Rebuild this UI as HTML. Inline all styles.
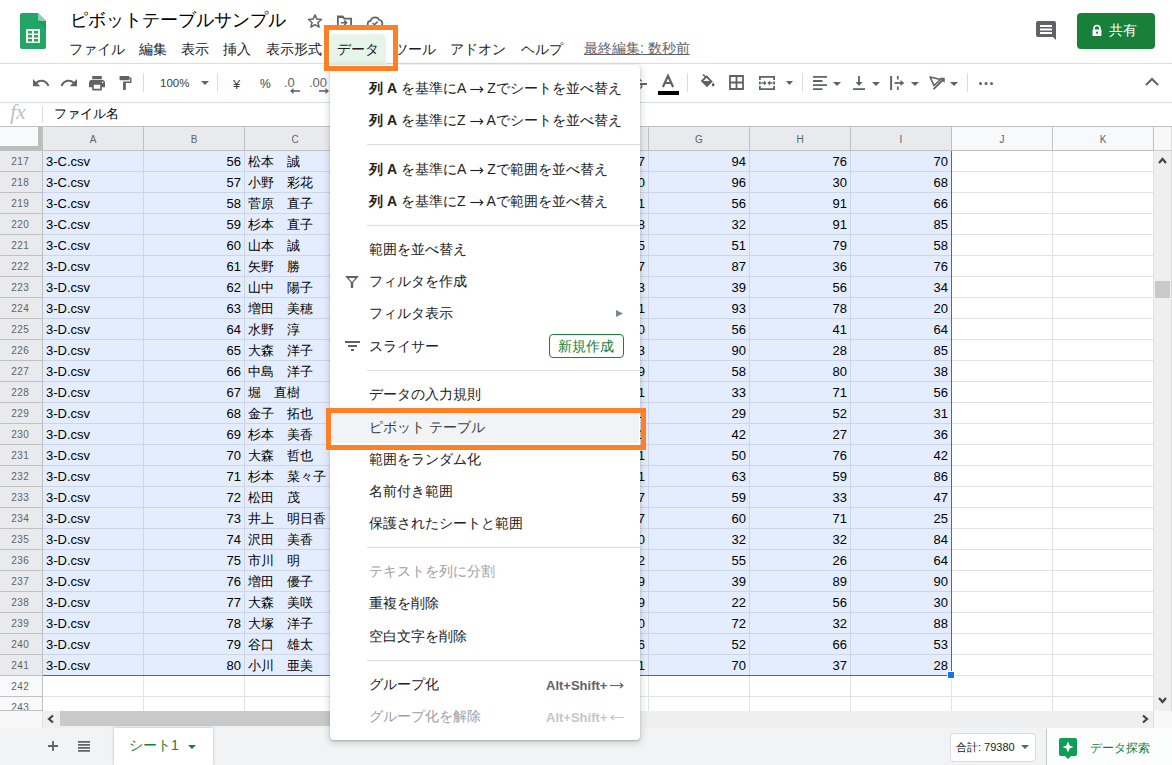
<!DOCTYPE html>
<html><head><meta charset="utf-8"><style>
*{box-sizing:border-box;margin:0;padding:0}
html,body{width:1172px;height:765px;overflow:hidden;background:#fff;font-family:"Liberation Sans",sans-serif;color:#202124}
.a{position:absolute}
.t{position:absolute;white-space:nowrap;line-height:1}
svg{position:absolute;overflow:visible}
</style></head>
<body>
<div class="a" style="left:0px;top:126px;width:1172px;height:1px;background:#c0c0c0"></div><div class="a" style="left:0px;top:127px;width:42px;height:23px;background:#f8f9fa"></div><div class="a" style="left:43px;top:127px;width:100px;height:23px;background:#e8eaed"></div><div class="a" style="left:143px;top:127px;width:1px;height:23px;background:#c0c0c0"></div><div class="t" style="left:43px;top:135px;width:100px;text-align:center;font-size:10px;color:#5f6368">A</div><div class="a" style="left:144px;top:127px;width:100px;height:23px;background:#e8eaed"></div><div class="a" style="left:244px;top:127px;width:1px;height:23px;background:#c0c0c0"></div><div class="t" style="left:144px;top:135px;width:100px;text-align:center;font-size:10px;color:#5f6368">B</div><div class="a" style="left:245px;top:127px;width:100px;height:23px;background:#e8eaed"></div><div class="a" style="left:345px;top:127px;width:1px;height:23px;background:#c0c0c0"></div><div class="t" style="left:245px;top:135px;width:100px;text-align:center;font-size:10px;color:#5f6368">C</div><div class="a" style="left:346px;top:127px;width:100px;height:23px;background:#e8eaed"></div><div class="a" style="left:446px;top:127px;width:1px;height:23px;background:#c0c0c0"></div><div class="t" style="left:346px;top:135px;width:100px;text-align:center;font-size:10px;color:#5f6368">D</div><div class="a" style="left:447px;top:127px;width:100px;height:23px;background:#e8eaed"></div><div class="a" style="left:547px;top:127px;width:1px;height:23px;background:#c0c0c0"></div><div class="t" style="left:447px;top:135px;width:100px;text-align:center;font-size:10px;color:#5f6368">E</div><div class="a" style="left:548px;top:127px;width:100px;height:23px;background:#e8eaed"></div><div class="a" style="left:648px;top:127px;width:1px;height:23px;background:#c0c0c0"></div><div class="t" style="left:548px;top:135px;width:100px;text-align:center;font-size:10px;color:#5f6368">F</div><div class="a" style="left:649px;top:127px;width:100px;height:23px;background:#e8eaed"></div><div class="a" style="left:749px;top:127px;width:1px;height:23px;background:#c0c0c0"></div><div class="t" style="left:649px;top:135px;width:100px;text-align:center;font-size:10px;color:#5f6368">G</div><div class="a" style="left:750px;top:127px;width:100px;height:23px;background:#e8eaed"></div><div class="a" style="left:850px;top:127px;width:1px;height:23px;background:#c0c0c0"></div><div class="t" style="left:750px;top:135px;width:100px;text-align:center;font-size:10px;color:#5f6368">H</div><div class="a" style="left:851px;top:127px;width:100px;height:23px;background:#e8eaed"></div><div class="a" style="left:951px;top:127px;width:1px;height:23px;background:#c0c0c0"></div><div class="t" style="left:851px;top:135px;width:100px;text-align:center;font-size:10px;color:#5f6368">I</div><div class="a" style="left:952px;top:127px;width:100px;height:23px;background:#f8f9fa"></div><div class="a" style="left:1052px;top:127px;width:1px;height:23px;background:#c0c0c0"></div><div class="t" style="left:952px;top:135px;width:100px;text-align:center;font-size:10px;color:#5f6368">J</div><div class="a" style="left:1053px;top:127px;width:100px;height:23px;background:#f8f9fa"></div><div class="a" style="left:1153px;top:127px;width:1px;height:23px;background:#c0c0c0"></div><div class="t" style="left:1053px;top:135px;width:100px;text-align:center;font-size:10px;color:#5f6368">K</div><div class="a" style="left:38px;top:127px;width:4px;height:23px;background:#bdbdbd"></div><div class="a" style="left:0px;top:146px;width:42px;height:4px;background:#bdbdbd"></div><div class="a" style="left:42px;top:127px;width:1px;height:23px;background:#c0c0c0"></div><div class="a" style="left:0px;top:150px;width:1154px;height:1px;background:#c0c0c0"></div><div class="a" style="left:43px;top:151px;width:909px;height:525px;background:#e4edfd"></div><div class="a" style="left:0px;top:151px;width:42px;height:20px;background:#e8eaed"></div><div class="t" style="left:0;top:157px;width:40px;text-align:center;font-size:10px;letter-spacing:0.5px;text-indent:0.5px;color:#5f6368">217</div><div class="a" style="left:0px;top:171px;width:42px;height:1px;background:#c0c0c0"></div><div class="a" style="left:43px;top:171px;width:909px;height:1px;background:#cdd6e6"></div><div class="a" style="left:952px;top:171px;width:202px;height:1px;background:#e2e3e3"></div><div class="a" style="left:0px;top:172px;width:42px;height:20px;background:#e8eaed"></div><div class="t" style="left:0;top:178px;width:40px;text-align:center;font-size:10px;letter-spacing:0.5px;text-indent:0.5px;color:#5f6368">218</div><div class="a" style="left:0px;top:192px;width:42px;height:1px;background:#c0c0c0"></div><div class="a" style="left:43px;top:192px;width:909px;height:1px;background:#cdd6e6"></div><div class="a" style="left:952px;top:192px;width:202px;height:1px;background:#e2e3e3"></div><div class="a" style="left:0px;top:193px;width:42px;height:20px;background:#e8eaed"></div><div class="t" style="left:0;top:199px;width:40px;text-align:center;font-size:10px;letter-spacing:0.5px;text-indent:0.5px;color:#5f6368">219</div><div class="a" style="left:0px;top:213px;width:42px;height:1px;background:#c0c0c0"></div><div class="a" style="left:43px;top:213px;width:909px;height:1px;background:#cdd6e6"></div><div class="a" style="left:952px;top:213px;width:202px;height:1px;background:#e2e3e3"></div><div class="a" style="left:0px;top:214px;width:42px;height:20px;background:#e8eaed"></div><div class="t" style="left:0;top:220px;width:40px;text-align:center;font-size:10px;letter-spacing:0.5px;text-indent:0.5px;color:#5f6368">220</div><div class="a" style="left:0px;top:234px;width:42px;height:1px;background:#c0c0c0"></div><div class="a" style="left:43px;top:234px;width:909px;height:1px;background:#cdd6e6"></div><div class="a" style="left:952px;top:234px;width:202px;height:1px;background:#e2e3e3"></div><div class="a" style="left:0px;top:235px;width:42px;height:20px;background:#e8eaed"></div><div class="t" style="left:0;top:241px;width:40px;text-align:center;font-size:10px;letter-spacing:0.5px;text-indent:0.5px;color:#5f6368">221</div><div class="a" style="left:0px;top:255px;width:42px;height:1px;background:#c0c0c0"></div><div class="a" style="left:43px;top:255px;width:909px;height:1px;background:#cdd6e6"></div><div class="a" style="left:952px;top:255px;width:202px;height:1px;background:#e2e3e3"></div><div class="a" style="left:0px;top:256px;width:42px;height:20px;background:#e8eaed"></div><div class="t" style="left:0;top:262px;width:40px;text-align:center;font-size:10px;letter-spacing:0.5px;text-indent:0.5px;color:#5f6368">222</div><div class="a" style="left:0px;top:276px;width:42px;height:1px;background:#c0c0c0"></div><div class="a" style="left:43px;top:276px;width:909px;height:1px;background:#cdd6e6"></div><div class="a" style="left:952px;top:276px;width:202px;height:1px;background:#e2e3e3"></div><div class="a" style="left:0px;top:277px;width:42px;height:20px;background:#e8eaed"></div><div class="t" style="left:0;top:283px;width:40px;text-align:center;font-size:10px;letter-spacing:0.5px;text-indent:0.5px;color:#5f6368">223</div><div class="a" style="left:0px;top:297px;width:42px;height:1px;background:#c0c0c0"></div><div class="a" style="left:43px;top:297px;width:909px;height:1px;background:#cdd6e6"></div><div class="a" style="left:952px;top:297px;width:202px;height:1px;background:#e2e3e3"></div><div class="a" style="left:0px;top:298px;width:42px;height:20px;background:#e8eaed"></div><div class="t" style="left:0;top:304px;width:40px;text-align:center;font-size:10px;letter-spacing:0.5px;text-indent:0.5px;color:#5f6368">224</div><div class="a" style="left:0px;top:318px;width:42px;height:1px;background:#c0c0c0"></div><div class="a" style="left:43px;top:318px;width:909px;height:1px;background:#cdd6e6"></div><div class="a" style="left:952px;top:318px;width:202px;height:1px;background:#e2e3e3"></div><div class="a" style="left:0px;top:319px;width:42px;height:20px;background:#e8eaed"></div><div class="t" style="left:0;top:325px;width:40px;text-align:center;font-size:10px;letter-spacing:0.5px;text-indent:0.5px;color:#5f6368">225</div><div class="a" style="left:0px;top:339px;width:42px;height:1px;background:#c0c0c0"></div><div class="a" style="left:43px;top:339px;width:909px;height:1px;background:#cdd6e6"></div><div class="a" style="left:952px;top:339px;width:202px;height:1px;background:#e2e3e3"></div><div class="a" style="left:0px;top:340px;width:42px;height:20px;background:#e8eaed"></div><div class="t" style="left:0;top:346px;width:40px;text-align:center;font-size:10px;letter-spacing:0.5px;text-indent:0.5px;color:#5f6368">226</div><div class="a" style="left:0px;top:360px;width:42px;height:1px;background:#c0c0c0"></div><div class="a" style="left:43px;top:360px;width:909px;height:1px;background:#cdd6e6"></div><div class="a" style="left:952px;top:360px;width:202px;height:1px;background:#e2e3e3"></div><div class="a" style="left:0px;top:361px;width:42px;height:20px;background:#e8eaed"></div><div class="t" style="left:0;top:367px;width:40px;text-align:center;font-size:10px;letter-spacing:0.5px;text-indent:0.5px;color:#5f6368">227</div><div class="a" style="left:0px;top:381px;width:42px;height:1px;background:#c0c0c0"></div><div class="a" style="left:43px;top:381px;width:909px;height:1px;background:#cdd6e6"></div><div class="a" style="left:952px;top:381px;width:202px;height:1px;background:#e2e3e3"></div><div class="a" style="left:0px;top:382px;width:42px;height:20px;background:#e8eaed"></div><div class="t" style="left:0;top:388px;width:40px;text-align:center;font-size:10px;letter-spacing:0.5px;text-indent:0.5px;color:#5f6368">228</div><div class="a" style="left:0px;top:402px;width:42px;height:1px;background:#c0c0c0"></div><div class="a" style="left:43px;top:402px;width:909px;height:1px;background:#cdd6e6"></div><div class="a" style="left:952px;top:402px;width:202px;height:1px;background:#e2e3e3"></div><div class="a" style="left:0px;top:403px;width:42px;height:20px;background:#e8eaed"></div><div class="t" style="left:0;top:409px;width:40px;text-align:center;font-size:10px;letter-spacing:0.5px;text-indent:0.5px;color:#5f6368">229</div><div class="a" style="left:0px;top:423px;width:42px;height:1px;background:#c0c0c0"></div><div class="a" style="left:43px;top:423px;width:909px;height:1px;background:#cdd6e6"></div><div class="a" style="left:952px;top:423px;width:202px;height:1px;background:#e2e3e3"></div><div class="a" style="left:0px;top:424px;width:42px;height:20px;background:#e8eaed"></div><div class="t" style="left:0;top:430px;width:40px;text-align:center;font-size:10px;letter-spacing:0.5px;text-indent:0.5px;color:#5f6368">230</div><div class="a" style="left:0px;top:444px;width:42px;height:1px;background:#c0c0c0"></div><div class="a" style="left:43px;top:444px;width:909px;height:1px;background:#cdd6e6"></div><div class="a" style="left:952px;top:444px;width:202px;height:1px;background:#e2e3e3"></div><div class="a" style="left:0px;top:445px;width:42px;height:20px;background:#e8eaed"></div><div class="t" style="left:0;top:451px;width:40px;text-align:center;font-size:10px;letter-spacing:0.5px;text-indent:0.5px;color:#5f6368">231</div><div class="a" style="left:0px;top:465px;width:42px;height:1px;background:#c0c0c0"></div><div class="a" style="left:43px;top:465px;width:909px;height:1px;background:#cdd6e6"></div><div class="a" style="left:952px;top:465px;width:202px;height:1px;background:#e2e3e3"></div><div class="a" style="left:0px;top:466px;width:42px;height:20px;background:#e8eaed"></div><div class="t" style="left:0;top:472px;width:40px;text-align:center;font-size:10px;letter-spacing:0.5px;text-indent:0.5px;color:#5f6368">232</div><div class="a" style="left:0px;top:486px;width:42px;height:1px;background:#c0c0c0"></div><div class="a" style="left:43px;top:486px;width:909px;height:1px;background:#cdd6e6"></div><div class="a" style="left:952px;top:486px;width:202px;height:1px;background:#e2e3e3"></div><div class="a" style="left:0px;top:487px;width:42px;height:20px;background:#e8eaed"></div><div class="t" style="left:0;top:493px;width:40px;text-align:center;font-size:10px;letter-spacing:0.5px;text-indent:0.5px;color:#5f6368">233</div><div class="a" style="left:0px;top:507px;width:42px;height:1px;background:#c0c0c0"></div><div class="a" style="left:43px;top:507px;width:909px;height:1px;background:#cdd6e6"></div><div class="a" style="left:952px;top:507px;width:202px;height:1px;background:#e2e3e3"></div><div class="a" style="left:0px;top:508px;width:42px;height:20px;background:#e8eaed"></div><div class="t" style="left:0;top:514px;width:40px;text-align:center;font-size:10px;letter-spacing:0.5px;text-indent:0.5px;color:#5f6368">234</div><div class="a" style="left:0px;top:528px;width:42px;height:1px;background:#c0c0c0"></div><div class="a" style="left:43px;top:528px;width:909px;height:1px;background:#cdd6e6"></div><div class="a" style="left:952px;top:528px;width:202px;height:1px;background:#e2e3e3"></div><div class="a" style="left:0px;top:529px;width:42px;height:20px;background:#e8eaed"></div><div class="t" style="left:0;top:535px;width:40px;text-align:center;font-size:10px;letter-spacing:0.5px;text-indent:0.5px;color:#5f6368">235</div><div class="a" style="left:0px;top:549px;width:42px;height:1px;background:#c0c0c0"></div><div class="a" style="left:43px;top:549px;width:909px;height:1px;background:#cdd6e6"></div><div class="a" style="left:952px;top:549px;width:202px;height:1px;background:#e2e3e3"></div><div class="a" style="left:0px;top:550px;width:42px;height:20px;background:#e8eaed"></div><div class="t" style="left:0;top:556px;width:40px;text-align:center;font-size:10px;letter-spacing:0.5px;text-indent:0.5px;color:#5f6368">236</div><div class="a" style="left:0px;top:570px;width:42px;height:1px;background:#c0c0c0"></div><div class="a" style="left:43px;top:570px;width:909px;height:1px;background:#cdd6e6"></div><div class="a" style="left:952px;top:570px;width:202px;height:1px;background:#e2e3e3"></div><div class="a" style="left:0px;top:571px;width:42px;height:20px;background:#e8eaed"></div><div class="t" style="left:0;top:577px;width:40px;text-align:center;font-size:10px;letter-spacing:0.5px;text-indent:0.5px;color:#5f6368">237</div><div class="a" style="left:0px;top:591px;width:42px;height:1px;background:#c0c0c0"></div><div class="a" style="left:43px;top:591px;width:909px;height:1px;background:#cdd6e6"></div><div class="a" style="left:952px;top:591px;width:202px;height:1px;background:#e2e3e3"></div><div class="a" style="left:0px;top:592px;width:42px;height:20px;background:#e8eaed"></div><div class="t" style="left:0;top:598px;width:40px;text-align:center;font-size:10px;letter-spacing:0.5px;text-indent:0.5px;color:#5f6368">238</div><div class="a" style="left:0px;top:612px;width:42px;height:1px;background:#c0c0c0"></div><div class="a" style="left:43px;top:612px;width:909px;height:1px;background:#cdd6e6"></div><div class="a" style="left:952px;top:612px;width:202px;height:1px;background:#e2e3e3"></div><div class="a" style="left:0px;top:613px;width:42px;height:20px;background:#e8eaed"></div><div class="t" style="left:0;top:619px;width:40px;text-align:center;font-size:10px;letter-spacing:0.5px;text-indent:0.5px;color:#5f6368">239</div><div class="a" style="left:0px;top:633px;width:42px;height:1px;background:#c0c0c0"></div><div class="a" style="left:43px;top:633px;width:909px;height:1px;background:#cdd6e6"></div><div class="a" style="left:952px;top:633px;width:202px;height:1px;background:#e2e3e3"></div><div class="a" style="left:0px;top:634px;width:42px;height:20px;background:#e8eaed"></div><div class="t" style="left:0;top:640px;width:40px;text-align:center;font-size:10px;letter-spacing:0.5px;text-indent:0.5px;color:#5f6368">240</div><div class="a" style="left:0px;top:654px;width:42px;height:1px;background:#c0c0c0"></div><div class="a" style="left:43px;top:654px;width:909px;height:1px;background:#cdd6e6"></div><div class="a" style="left:952px;top:654px;width:202px;height:1px;background:#e2e3e3"></div><div class="a" style="left:0px;top:655px;width:42px;height:20px;background:#e8eaed"></div><div class="t" style="left:0;top:661px;width:40px;text-align:center;font-size:10px;letter-spacing:0.5px;text-indent:0.5px;color:#5f6368">241</div><div class="a" style="left:0px;top:675px;width:42px;height:1px;background:#c0c0c0"></div><div class="a" style="left:952px;top:675px;width:202px;height:1px;background:#e2e3e3"></div><div class="a" style="left:0px;top:676px;width:42px;height:20px;background:#f8f9fa"></div><div class="t" style="left:0;top:682px;width:40px;text-align:center;font-size:10px;letter-spacing:0.5px;text-indent:0.5px;color:#5f6368">242</div><div class="a" style="left:0px;top:696px;width:42px;height:1px;background:#c0c0c0"></div><div class="a" style="left:43px;top:696px;width:1111px;height:1px;background:#e2e3e3"></div><div class="a" style="left:0px;top:697px;width:42px;height:14px;background:#f8f9fa"></div><div class="t" style="left:0;top:703px;width:40px;text-align:center;font-size:10px;letter-spacing:0.5px;text-indent:0.5px;color:#5f6368">243</div><div class="a" style="left:42px;top:151px;width:1px;height:560px;background:#c0c0c0"></div><div class="a" style="left:143px;top:151px;width:1px;height:525px;background:#cdd6e6"></div><div class="a" style="left:143px;top:676px;width:1px;height:35px;background:#e2e3e3"></div><div class="a" style="left:244px;top:151px;width:1px;height:525px;background:#cdd6e6"></div><div class="a" style="left:244px;top:676px;width:1px;height:35px;background:#e2e3e3"></div><div class="a" style="left:345px;top:151px;width:1px;height:525px;background:#cdd6e6"></div><div class="a" style="left:345px;top:676px;width:1px;height:35px;background:#e2e3e3"></div><div class="a" style="left:446px;top:151px;width:1px;height:525px;background:#cdd6e6"></div><div class="a" style="left:446px;top:676px;width:1px;height:35px;background:#e2e3e3"></div><div class="a" style="left:547px;top:151px;width:1px;height:525px;background:#cdd6e6"></div><div class="a" style="left:547px;top:676px;width:1px;height:35px;background:#e2e3e3"></div><div class="a" style="left:648px;top:151px;width:1px;height:525px;background:#cdd6e6"></div><div class="a" style="left:648px;top:676px;width:1px;height:35px;background:#e2e3e3"></div><div class="a" style="left:749px;top:151px;width:1px;height:525px;background:#cdd6e6"></div><div class="a" style="left:749px;top:676px;width:1px;height:35px;background:#e2e3e3"></div><div class="a" style="left:850px;top:151px;width:1px;height:525px;background:#cdd6e6"></div><div class="a" style="left:850px;top:676px;width:1px;height:35px;background:#e2e3e3"></div><div class="a" style="left:951px;top:151px;width:1px;height:560px;background:#e2e3e3"></div><div class="a" style="left:1052px;top:151px;width:1px;height:560px;background:#e2e3e3"></div><div class="a" style="left:1153px;top:151px;width:1px;height:560px;background:#e2e3e3"></div><div class="a" style="left:43px;top:675px;width:909px;height:1px;background:#1a73e8"></div><div class="a" style="left:951px;top:151px;width:1px;height:525px;background:#1a73e8"></div><div class="a" style="left:947px;top:671px;width:8px;height:8px;background:#1a73e8;border:1px solid #fff"></div><div class="t" style="left:46px;top:155px;font-size:13px;color:#000">3-C.csv</div><div class="t" style="left:144px;top:155px;width:97px;text-align:right;font-size:13px;color:#000">56</div><div class="t" style="left:248px;top:155px;font-size:13px;color:#000">松本　誠</div><div class="t" style="left:548px;top:155px;width:97px;text-align:right;font-size:13px;color:#000">17</div><div class="t" style="left:649px;top:155px;width:97px;text-align:right;font-size:13px;color:#000">94</div><div class="t" style="left:750px;top:155px;width:97px;text-align:right;font-size:13px;color:#000">76</div><div class="t" style="left:851px;top:155px;width:97px;text-align:right;font-size:13px;color:#000">70</div><div class="t" style="left:46px;top:176px;font-size:13px;color:#000">3-C.csv</div><div class="t" style="left:144px;top:176px;width:97px;text-align:right;font-size:13px;color:#000">57</div><div class="t" style="left:248px;top:176px;font-size:13px;color:#000">小野　彩花</div><div class="t" style="left:548px;top:176px;width:97px;text-align:right;font-size:13px;color:#000">20</div><div class="t" style="left:649px;top:176px;width:97px;text-align:right;font-size:13px;color:#000">96</div><div class="t" style="left:750px;top:176px;width:97px;text-align:right;font-size:13px;color:#000">30</div><div class="t" style="left:851px;top:176px;width:97px;text-align:right;font-size:13px;color:#000">68</div><div class="t" style="left:46px;top:197px;font-size:13px;color:#000">3-C.csv</div><div class="t" style="left:144px;top:197px;width:97px;text-align:right;font-size:13px;color:#000">58</div><div class="t" style="left:248px;top:197px;font-size:13px;color:#000">菅原　直子</div><div class="t" style="left:548px;top:197px;width:97px;text-align:right;font-size:13px;color:#000">41</div><div class="t" style="left:649px;top:197px;width:97px;text-align:right;font-size:13px;color:#000">56</div><div class="t" style="left:750px;top:197px;width:97px;text-align:right;font-size:13px;color:#000">91</div><div class="t" style="left:851px;top:197px;width:97px;text-align:right;font-size:13px;color:#000">66</div><div class="t" style="left:46px;top:218px;font-size:13px;color:#000">3-C.csv</div><div class="t" style="left:144px;top:218px;width:97px;text-align:right;font-size:13px;color:#000">59</div><div class="t" style="left:248px;top:218px;font-size:13px;color:#000">杉本　直子</div><div class="t" style="left:548px;top:218px;width:97px;text-align:right;font-size:13px;color:#000">38</div><div class="t" style="left:649px;top:218px;width:97px;text-align:right;font-size:13px;color:#000">32</div><div class="t" style="left:750px;top:218px;width:97px;text-align:right;font-size:13px;color:#000">91</div><div class="t" style="left:851px;top:218px;width:97px;text-align:right;font-size:13px;color:#000">85</div><div class="t" style="left:46px;top:239px;font-size:13px;color:#000">3-C.csv</div><div class="t" style="left:144px;top:239px;width:97px;text-align:right;font-size:13px;color:#000">60</div><div class="t" style="left:248px;top:239px;font-size:13px;color:#000">山本　誠</div><div class="t" style="left:548px;top:239px;width:97px;text-align:right;font-size:13px;color:#000">25</div><div class="t" style="left:649px;top:239px;width:97px;text-align:right;font-size:13px;color:#000">51</div><div class="t" style="left:750px;top:239px;width:97px;text-align:right;font-size:13px;color:#000">79</div><div class="t" style="left:851px;top:239px;width:97px;text-align:right;font-size:13px;color:#000">58</div><div class="t" style="left:46px;top:260px;font-size:13px;color:#000">3-D.csv</div><div class="t" style="left:144px;top:260px;width:97px;text-align:right;font-size:13px;color:#000">61</div><div class="t" style="left:248px;top:260px;font-size:13px;color:#000">矢野　勝</div><div class="t" style="left:548px;top:260px;width:97px;text-align:right;font-size:13px;color:#000">47</div><div class="t" style="left:649px;top:260px;width:97px;text-align:right;font-size:13px;color:#000">87</div><div class="t" style="left:750px;top:260px;width:97px;text-align:right;font-size:13px;color:#000">36</div><div class="t" style="left:851px;top:260px;width:97px;text-align:right;font-size:13px;color:#000">76</div><div class="t" style="left:46px;top:281px;font-size:13px;color:#000">3-D.csv</div><div class="t" style="left:144px;top:281px;width:97px;text-align:right;font-size:13px;color:#000">62</div><div class="t" style="left:248px;top:281px;font-size:13px;color:#000">山中　陽子</div><div class="t" style="left:548px;top:281px;width:97px;text-align:right;font-size:13px;color:#000">53</div><div class="t" style="left:649px;top:281px;width:97px;text-align:right;font-size:13px;color:#000">39</div><div class="t" style="left:750px;top:281px;width:97px;text-align:right;font-size:13px;color:#000">56</div><div class="t" style="left:851px;top:281px;width:97px;text-align:right;font-size:13px;color:#000">34</div><div class="t" style="left:46px;top:302px;font-size:13px;color:#000">3-D.csv</div><div class="t" style="left:144px;top:302px;width:97px;text-align:right;font-size:13px;color:#000">63</div><div class="t" style="left:248px;top:302px;font-size:13px;color:#000">増田　美穂</div><div class="t" style="left:548px;top:302px;width:97px;text-align:right;font-size:13px;color:#000">61</div><div class="t" style="left:649px;top:302px;width:97px;text-align:right;font-size:13px;color:#000">93</div><div class="t" style="left:750px;top:302px;width:97px;text-align:right;font-size:13px;color:#000">78</div><div class="t" style="left:851px;top:302px;width:97px;text-align:right;font-size:13px;color:#000">20</div><div class="t" style="left:46px;top:323px;font-size:13px;color:#000">3-D.csv</div><div class="t" style="left:144px;top:323px;width:97px;text-align:right;font-size:13px;color:#000">64</div><div class="t" style="left:248px;top:323px;font-size:13px;color:#000">水野　淳</div><div class="t" style="left:548px;top:323px;width:97px;text-align:right;font-size:13px;color:#000">70</div><div class="t" style="left:649px;top:323px;width:97px;text-align:right;font-size:13px;color:#000">56</div><div class="t" style="left:750px;top:323px;width:97px;text-align:right;font-size:13px;color:#000">41</div><div class="t" style="left:851px;top:323px;width:97px;text-align:right;font-size:13px;color:#000">64</div><div class="t" style="left:46px;top:344px;font-size:13px;color:#000">3-D.csv</div><div class="t" style="left:144px;top:344px;width:97px;text-align:right;font-size:13px;color:#000">65</div><div class="t" style="left:248px;top:344px;font-size:13px;color:#000">大森　洋子</div><div class="t" style="left:548px;top:344px;width:97px;text-align:right;font-size:13px;color:#000">83</div><div class="t" style="left:649px;top:344px;width:97px;text-align:right;font-size:13px;color:#000">90</div><div class="t" style="left:750px;top:344px;width:97px;text-align:right;font-size:13px;color:#000">28</div><div class="t" style="left:851px;top:344px;width:97px;text-align:right;font-size:13px;color:#000">85</div><div class="t" style="left:46px;top:365px;font-size:13px;color:#000">3-D.csv</div><div class="t" style="left:144px;top:365px;width:97px;text-align:right;font-size:13px;color:#000">66</div><div class="t" style="left:248px;top:365px;font-size:13px;color:#000">中島　洋子</div><div class="t" style="left:548px;top:365px;width:97px;text-align:right;font-size:13px;color:#000">29</div><div class="t" style="left:649px;top:365px;width:97px;text-align:right;font-size:13px;color:#000">58</div><div class="t" style="left:750px;top:365px;width:97px;text-align:right;font-size:13px;color:#000">80</div><div class="t" style="left:851px;top:365px;width:97px;text-align:right;font-size:13px;color:#000">38</div><div class="t" style="left:46px;top:386px;font-size:13px;color:#000">3-D.csv</div><div class="t" style="left:144px;top:386px;width:97px;text-align:right;font-size:13px;color:#000">67</div><div class="t" style="left:248px;top:386px;font-size:13px;color:#000">堀　直樹</div><div class="t" style="left:548px;top:386px;width:97px;text-align:right;font-size:13px;color:#000">91</div><div class="t" style="left:649px;top:386px;width:97px;text-align:right;font-size:13px;color:#000">33</div><div class="t" style="left:750px;top:386px;width:97px;text-align:right;font-size:13px;color:#000">71</div><div class="t" style="left:851px;top:386px;width:97px;text-align:right;font-size:13px;color:#000">56</div><div class="t" style="left:46px;top:407px;font-size:13px;color:#000">3-D.csv</div><div class="t" style="left:144px;top:407px;width:97px;text-align:right;font-size:13px;color:#000">68</div><div class="t" style="left:248px;top:407px;font-size:13px;color:#000">金子　拓也</div><div class="t" style="left:548px;top:407px;width:97px;text-align:right;font-size:13px;color:#000">41</div><div class="t" style="left:649px;top:407px;width:97px;text-align:right;font-size:13px;color:#000">29</div><div class="t" style="left:750px;top:407px;width:97px;text-align:right;font-size:13px;color:#000">52</div><div class="t" style="left:851px;top:407px;width:97px;text-align:right;font-size:13px;color:#000">31</div><div class="t" style="left:46px;top:428px;font-size:13px;color:#000">3-D.csv</div><div class="t" style="left:144px;top:428px;width:97px;text-align:right;font-size:13px;color:#000">69</div><div class="t" style="left:248px;top:428px;font-size:13px;color:#000">杉本　美香</div><div class="t" style="left:548px;top:428px;width:97px;text-align:right;font-size:13px;color:#000">51</div><div class="t" style="left:649px;top:428px;width:97px;text-align:right;font-size:13px;color:#000">42</div><div class="t" style="left:750px;top:428px;width:97px;text-align:right;font-size:13px;color:#000">27</div><div class="t" style="left:851px;top:428px;width:97px;text-align:right;font-size:13px;color:#000">36</div><div class="t" style="left:46px;top:449px;font-size:13px;color:#000">3-D.csv</div><div class="t" style="left:144px;top:449px;width:97px;text-align:right;font-size:13px;color:#000">70</div><div class="t" style="left:248px;top:449px;font-size:13px;color:#000">大森　哲也</div><div class="t" style="left:548px;top:449px;width:97px;text-align:right;font-size:13px;color:#000">61</div><div class="t" style="left:649px;top:449px;width:97px;text-align:right;font-size:13px;color:#000">50</div><div class="t" style="left:750px;top:449px;width:97px;text-align:right;font-size:13px;color:#000">76</div><div class="t" style="left:851px;top:449px;width:97px;text-align:right;font-size:13px;color:#000">42</div><div class="t" style="left:46px;top:470px;font-size:13px;color:#000">3-D.csv</div><div class="t" style="left:144px;top:470px;width:97px;text-align:right;font-size:13px;color:#000">71</div><div class="t" style="left:248px;top:470px;font-size:13px;color:#000">杉本　菜々子</div><div class="t" style="left:548px;top:470px;width:97px;text-align:right;font-size:13px;color:#000">71</div><div class="t" style="left:649px;top:470px;width:97px;text-align:right;font-size:13px;color:#000">63</div><div class="t" style="left:750px;top:470px;width:97px;text-align:right;font-size:13px;color:#000">59</div><div class="t" style="left:851px;top:470px;width:97px;text-align:right;font-size:13px;color:#000">86</div><div class="t" style="left:46px;top:491px;font-size:13px;color:#000">3-D.csv</div><div class="t" style="left:144px;top:491px;width:97px;text-align:right;font-size:13px;color:#000">72</div><div class="t" style="left:248px;top:491px;font-size:13px;color:#000">松田　茂</div><div class="t" style="left:548px;top:491px;width:97px;text-align:right;font-size:13px;color:#000">77</div><div class="t" style="left:649px;top:491px;width:97px;text-align:right;font-size:13px;color:#000">59</div><div class="t" style="left:750px;top:491px;width:97px;text-align:right;font-size:13px;color:#000">33</div><div class="t" style="left:851px;top:491px;width:97px;text-align:right;font-size:13px;color:#000">47</div><div class="t" style="left:46px;top:512px;font-size:13px;color:#000">3-D.csv</div><div class="t" style="left:144px;top:512px;width:97px;text-align:right;font-size:13px;color:#000">73</div><div class="t" style="left:248px;top:512px;font-size:13px;color:#000">井上　明日香</div><div class="t" style="left:548px;top:512px;width:97px;text-align:right;font-size:13px;color:#000">87</div><div class="t" style="left:649px;top:512px;width:97px;text-align:right;font-size:13px;color:#000">60</div><div class="t" style="left:750px;top:512px;width:97px;text-align:right;font-size:13px;color:#000">71</div><div class="t" style="left:851px;top:512px;width:97px;text-align:right;font-size:13px;color:#000">25</div><div class="t" style="left:46px;top:533px;font-size:13px;color:#000">3-D.csv</div><div class="t" style="left:144px;top:533px;width:97px;text-align:right;font-size:13px;color:#000">74</div><div class="t" style="left:248px;top:533px;font-size:13px;color:#000">沢田　美香</div><div class="t" style="left:548px;top:533px;width:97px;text-align:right;font-size:13px;color:#000">90</div><div class="t" style="left:649px;top:533px;width:97px;text-align:right;font-size:13px;color:#000">32</div><div class="t" style="left:750px;top:533px;width:97px;text-align:right;font-size:13px;color:#000">32</div><div class="t" style="left:851px;top:533px;width:97px;text-align:right;font-size:13px;color:#000">84</div><div class="t" style="left:46px;top:554px;font-size:13px;color:#000">3-D.csv</div><div class="t" style="left:144px;top:554px;width:97px;text-align:right;font-size:13px;color:#000">75</div><div class="t" style="left:248px;top:554px;font-size:13px;color:#000">市川　明</div><div class="t" style="left:548px;top:554px;width:97px;text-align:right;font-size:13px;color:#000">92</div><div class="t" style="left:649px;top:554px;width:97px;text-align:right;font-size:13px;color:#000">55</div><div class="t" style="left:750px;top:554px;width:97px;text-align:right;font-size:13px;color:#000">26</div><div class="t" style="left:851px;top:554px;width:97px;text-align:right;font-size:13px;color:#000">64</div><div class="t" style="left:46px;top:575px;font-size:13px;color:#000">3-D.csv</div><div class="t" style="left:144px;top:575px;width:97px;text-align:right;font-size:13px;color:#000">76</div><div class="t" style="left:248px;top:575px;font-size:13px;color:#000">増田　優子</div><div class="t" style="left:548px;top:575px;width:97px;text-align:right;font-size:13px;color:#000">49</div><div class="t" style="left:649px;top:575px;width:97px;text-align:right;font-size:13px;color:#000">39</div><div class="t" style="left:750px;top:575px;width:97px;text-align:right;font-size:13px;color:#000">89</div><div class="t" style="left:851px;top:575px;width:97px;text-align:right;font-size:13px;color:#000">90</div><div class="t" style="left:46px;top:596px;font-size:13px;color:#000">3-D.csv</div><div class="t" style="left:144px;top:596px;width:97px;text-align:right;font-size:13px;color:#000">77</div><div class="t" style="left:248px;top:596px;font-size:13px;color:#000">大森　美咲</div><div class="t" style="left:548px;top:596px;width:97px;text-align:right;font-size:13px;color:#000">59</div><div class="t" style="left:649px;top:596px;width:97px;text-align:right;font-size:13px;color:#000">22</div><div class="t" style="left:750px;top:596px;width:97px;text-align:right;font-size:13px;color:#000">56</div><div class="t" style="left:851px;top:596px;width:97px;text-align:right;font-size:13px;color:#000">30</div><div class="t" style="left:46px;top:617px;font-size:13px;color:#000">3-D.csv</div><div class="t" style="left:144px;top:617px;width:97px;text-align:right;font-size:13px;color:#000">78</div><div class="t" style="left:248px;top:617px;font-size:13px;color:#000">大塚　洋子</div><div class="t" style="left:548px;top:617px;width:97px;text-align:right;font-size:13px;color:#000">60</div><div class="t" style="left:649px;top:617px;width:97px;text-align:right;font-size:13px;color:#000">72</div><div class="t" style="left:750px;top:617px;width:97px;text-align:right;font-size:13px;color:#000">32</div><div class="t" style="left:851px;top:617px;width:97px;text-align:right;font-size:13px;color:#000">88</div><div class="t" style="left:46px;top:638px;font-size:13px;color:#000">3-D.csv</div><div class="t" style="left:144px;top:638px;width:97px;text-align:right;font-size:13px;color:#000">79</div><div class="t" style="left:248px;top:638px;font-size:13px;color:#000">谷口　雄太</div><div class="t" style="left:548px;top:638px;width:97px;text-align:right;font-size:13px;color:#000">66</div><div class="t" style="left:649px;top:638px;width:97px;text-align:right;font-size:13px;color:#000">52</div><div class="t" style="left:750px;top:638px;width:97px;text-align:right;font-size:13px;color:#000">66</div><div class="t" style="left:851px;top:638px;width:97px;text-align:right;font-size:13px;color:#000">53</div><div class="t" style="left:46px;top:659px;font-size:13px;color:#000">3-D.csv</div><div class="t" style="left:144px;top:659px;width:97px;text-align:right;font-size:13px;color:#000">80</div><div class="t" style="left:248px;top:659px;font-size:13px;color:#000">小川　亜美</div><div class="t" style="left:548px;top:659px;width:97px;text-align:right;font-size:13px;color:#000">41</div><div class="t" style="left:649px;top:659px;width:97px;text-align:right;font-size:13px;color:#000">70</div><div class="t" style="left:750px;top:659px;width:97px;text-align:right;font-size:13px;color:#000">37</div><div class="t" style="left:851px;top:659px;width:97px;text-align:right;font-size:13px;color:#000">28</div><div class="a" style="left:1154px;top:127px;width:18px;height:23px;background:#f8f8f8"></div><div class="a" style="left:1153px;top:127px;width:1px;height:24px;background:#c0c0c0"></div><div class="a" style="left:1153px;top:151px;width:1px;height:560px;background:#e2e2e2"></div><div class="a" style="left:1154px;top:150px;width:18px;height:1px;background:#d0d0d0"></div><div class="a" style="left:1154px;top:151px;width:18px;height:560px;background:#efefef"></div><div class="a" style="left:1171px;top:127px;width:1px;height:600px;background:#dadada"></div><div class="a" style="left:1155px;top:281px;width:15px;height:17px;background:#c9c9c9"></div><div class="a" style="left:0px;top:711px;width:1172px;height:17px;background:#efefef"></div><div class="a" style="left:0px;top:711px;width:42px;height:17px;background:#f8f8f8"></div><div class="a" style="left:0px;top:710px;width:42px;height:1px;background:#c0c0c0"></div><div class="a" style="left:42px;top:711px;width:1px;height:17px;background:#e2e2e2"></div><div class="a" style="left:60px;top:711px;width:580px;height:15px;background:#c9c9c9"></div><div class="a" style="left:1154px;top:711px;width:18px;height:17px;background:#f8f8f8"></div><div class="a" style="left:1153px;top:711px;width:1px;height:17px;background:#e2e2e2"></div><div class="a" style="left:0px;top:728px;width:1172px;height:37px;background:#f1f3f4"></div><div class="a" style="left:114px;top:728px;width:99px;height:37px;background:#fff;box-shadow:0 0 3px rgba(0,0,0,.22)"></div><div class="t" style="left:129px;top:738px;font-size:14px;color:#188038">シート1</div><svg style="left:188px;top:745px" width="8" height="4"><path d="M0 0H8L4 4Z" fill="#188038"/></svg><svg style="left:48px;top:741px" width="10" height="10"><path d="M4.1 0h1.8v4.1H10v1.8H5.9V10H4.1V5.9H0V4.1h4.1z" fill="#5f6368"/></svg><svg style="left:78px;top:741px" width="12" height="11"><path d="M0 0h12v1.8H0zM0 3h12v1.8H0zM0 6h12v1.8H0zM0 9h12v1.8H0z" fill="#5f6368"/></svg><div class="a" style="left:950px;top:733px;width:86px;height:29px;background:#fff;border:1px solid #dadce0;border-radius:4px"></div><div class="t" style="left:956px;top:742px;font-size:11px;color:#202124">合計: 79380</div><svg style="left:1021px;top:745px" width="8" height="4"><path d="M0 0H8L4 4Z" fill="#5f6368"/></svg><div class="a" style="left:1046px;top:729px;width:1px;height:36px;background:#c8c8c8"></div><div class="a" style="left:1047px;top:728px;width:125px;height:37px;background:#fcfdfd"></div><svg style="left:1059px;top:738px" width="18" height="21"><path d="M2 0h14a2 2 0 0 1 2 2v14a2 2 0 0 1-2 2h-4l-3 3-3-3H2a2 2 0 0 1-2-2V2a2 2 0 0 1 2-2z" fill="#0f9d58"/><path d="M9 3.5l1.6 3.9 3.9 1.6-3.9 1.6L9 14.5l-1.6-3.9L3.5 9l3.9-1.6z" fill="#fff"/></svg><div class="t" style="left:1090px;top:742px;font-size:12px;color:#188038">データ探索</div><div class="a" style="left:0px;top:0px;width:1172px;height:63px;background:#fff"></div><div class="a" style="left:0px;top:63px;width:1172px;height:1px;background:#dadce0"></div><svg style="left:20px;top:13px" width="26" height="36" viewBox="0 0 26 36">
<path d="M2 0h16l8 8v26a2 2 0 0 1-2 2H2a2 2 0 0 1-2-2V2a2 2 0 0 1 2-2z" fill="#23a566"/>
<path d="M18 0l8 8h-6a2 2 0 0 1-2-2z" fill="#8ed1b1"/>
<path d="M18 8h8v8z" fill="#1c8f54" opacity=".6"/>
<path d="M6 16h14v14H6z" fill="#f1f1f1"/>
<path d="M8 18h4v2.5H8zM14 18h4v2.5h-4zM8 22h4v2.5H8zM14 22h4v2.5h-4zM8 26h4v2.5H8zM14 26h4v2.5h-4z" fill="#23a566"/>
</svg><div class="t" style="left:70px;top:11px;font-size:18px;color:#000">ピボットテーブルサンプル</div><svg style="left:307px;top:13px" width="16" height="16" viewBox="0 0 24 24"><path d="M12 2.8l2.8 6.3 6.9.6-5.2 4.6 1.6 6.8L12 17.5l-6.1 3.6 1.6-6.8-5.2-4.6 6.9-.6z" fill="none" stroke="#5f6368" stroke-width="2.3" stroke-linejoin="round"/></svg><svg style="left:337px;top:15px" width="15" height="13" viewBox="0 0 15 13"><path d="M0.9 1.5v10.6h13.2V3.6H7.2L5.6 1.5z" fill="none" stroke="#5f6368" stroke-width="1.8"/><path d="M1 1h4.8l1.4 2H1z" fill="#5f6368"/><path d="M3.8 7.8h5.5M7.2 5.4l2.4 2.4-2.4 2.4" fill="none" stroke="#5f6368" stroke-width="1.5"/></svg><svg style="left:367px;top:16px" width="16" height="12" viewBox="0 0 16 12"><path d="M4 11.1a3.1 3.1 0 0 1-.4-6.2A4.6 4.6 0 0 1 12.2 4a3.6 3.6 0 0 1 .3 7.1z" fill="none" stroke="#5f6368" stroke-width="1.7"/><path d="M5.6 7l1.8 1.8 3.2-3.2" fill="none" stroke="#5f6368" stroke-width="1.5"/></svg><div class="a" style="left:330px;top:34px;width:56px;height:31px;background:#e6f4ea;border-radius:4px 4px 0 0"></div><div class="t" style="left:69px;top:42px;font-size:14px;color:#202124">ファイル</div><div class="t" style="left:139px;top:42px;font-size:14px;color:#202124">編集</div><div class="t" style="left:181px;top:42px;font-size:14px;color:#202124">表示</div><div class="t" style="left:223px;top:42px;font-size:14px;color:#202124">挿入</div><div class="t" style="left:266px;top:42px;font-size:14px;color:#202124">表示形式</div><div class="t" style="left:337px;top:42px;font-size:14px;color:#202124">データ</div><div class="t" style="left:394px;top:42px;font-size:14px;color:#202124">ツール</div><div class="t" style="left:450px;top:42px;font-size:14px;color:#202124">アドオン</div><div class="t" style="left:521px;top:42px;font-size:14px;color:#202124">ヘルプ</div><div class="t" style="left:584px;top:41px;font-size:14px;color:#5f6368;text-decoration:underline">最終編集: 数秒前</div><svg style="left:1036px;top:21px" width="20" height="20" viewBox="0 0 20 20"><path d="M2 0h16a2 2 0 0 1 2 2v17l-3-3H2a2 2 0 0 1-2-2V2a2 2 0 0 1 2-2z" fill="#5f6368"/><path d="M4 4h12v2H4zM4 7.5h12v2H4zM4 11h12v2H4z" fill="#fff"/></svg><div class="a" style="left:1077px;top:13px;width:78px;height:36px;background:#188038;border-radius:4px"></div><svg style="left:1092px;top:25px" width="10" height="11" viewBox="0 0 10 11"><path d="M2 5V3.5a3 3 0 0 1 6 0V5" fill="none" stroke="#fff" stroke-width="1.6"/><rect x="0.5" y="4.5" width="9" height="6.5" rx="1" fill="#fff"/><circle cx="5" cy="7.7" r="1.1" fill="#188038"/></svg><div class="t" style="left:1109px;top:23px;font-size:14px;color:#fff">共有</div><div class="a" style="left:0px;top:102px;width:1172px;height:1px;background:#dadce0"></div><svg style="left:33px;top:79px" width="16" height="7.2" viewBox="2 7 20 9"><path d="M12.5 8c-2.65 0-5.050.99-6.9 2.6L2 7v9h9l-3.62-3.62c1.390-1.16 3.160-1.88 5.120-1.88 3.54 0 6.55 2.31 7.6 5.5l2.37-.78C21.08 11.03 17.15 8 12.5 8z" fill="#5f6368"/></svg><svg style="left:61px;top:79px" width="16" height="7.2" viewBox="2 7 20 9"><path d="M18.4 10.6C16.55 8.99 14.15 8 11.5 8c-4.65 0-8.58 3.03-9.96 7.22L3.9 16c1.05-3.19 4.05-5.5 7.6-5.5 1.95 0 3.73.72 5.12 1.88L13 16h9V7l-3.6 3.6z" fill="#5f6368"/></svg><svg style="left:89px;top:76px" width="16" height="14.4" viewBox="2 3 20 18"><path d="M19 8H5c-1.66 0-3 1.34-3 3v6h4v4h12v-4h4v-6c0-1.66-1.34-3-3-3zm-3 11H8v-5h8v5zm3-7c-.55 0-1-.45-1-1s.45-1 1-1 1 .45 1 1-.45 1-1 1zm-1-9H6v4h12V3z" fill="#5f6368"/></svg><svg style="left:119px;top:76px" width="13" height="14" viewBox="4 2 17 20"><path d="M18 4V3c0-.55-.45-1-1-1H5c-.55 0-1 .45-1 1v4c0 .55.45 1 1 1h12c.55 0 1-.45 1-1V6h1v4H9v11c0 .55.45 1 1 1h2c.55 0 1-.45 1-1v-9h8V4h-3z" fill="#5f6368"/></svg><div class="a" style="left:143px;top:73px;width:1px;height:19px;background:#dadce0"></div><div class="t" style="left:160px;top:78px;font-size:11.5px;color:#3c4043">100%</div><svg style="left:201px;top:81px" width="8" height="4"><path d="M0 0h8L4 4z" fill="#5f6368"/></svg><div class="a" style="left:217px;top:73px;width:1px;height:19px;background:#dadce0"></div><div class="t" style="left:233px;top:78px;font-size:13px;color:#3c4043">¥</div><div class="t" style="left:260px;top:78px;font-size:12px;color:#3c4043">%</div><div class="t" style="left:284px;top:76px;font-size:13px;color:#5f6368">.0</div><svg style="left:290px;top:88px" width="10" height="6"><path d="M3 3h7" stroke="#5f6368" stroke-width="1.6"/><path d="M0 3l3.5-3v6z" fill="#5f6368"/></svg><div class="t" style="left:309px;top:76px;font-size:13px;color:#5f6368">.00</div><svg style="left:319px;top:88px" width="10" height="6"><path d="M0 3h7" stroke="#5f6368" stroke-width="1.6"/><path d="M10 3L6.5 0v6z" fill="#5f6368"/></svg><div class="t" style="left:633px;top:76px;font-size:15px;color:#5f6368">S</div><div class="a" style="left:631px;top:83px;width:16px;height:2px;background:#5f6368"></div><svg style="left:662px;top:75px" width="12" height="12"><path d="M0.9 12L6 0.8 11.1 12M2.9 8h6.2" fill="none" stroke="#5f6368" stroke-width="2.2"/></svg><div class="a" style="left:658px;top:91px;width:21px;height:4px;background:#000"></div><div class="a" style="left:687px;top:73px;width:1px;height:19px;background:#dadce0"></div><svg style="left:700px;top:74px" width="15" height="13"><path d="M3 0.5l3 3" stroke="#5f6368" stroke-width="1.6"/><path d="M6.5 2.5l5 5-4.5 4.5-5-5z" fill="none" stroke="#5f6368" stroke-width="1.8"/><path d="M1.5 7h10.5L7 12z" fill="#5f6368"/><path d="M13.2 8.5c.9 1.2 1.4 2 1.4 2.6a1.4 1.4 0 0 1-2.8 0c0-.6.5-1.4 1.4-2.6z" fill="#5f6368"/></svg><svg style="left:729px;top:75px" width="15" height="15"><path d="M1 1h13v13H1zM7.5 1v13M1 7.5h13" fill="none" stroke="#5f6368" stroke-width="1.8"/></svg><svg style="left:759px;top:76px" width="16" height="14"><path d="M0.9 4V0.9h14.2V4M0.9 10v3.1h14.2V10M0.9 5.5v3M15.1 5.5v3" fill="none" stroke="#5f6368" stroke-width="1.8"/><path d="M2.5 7h3.5M10 7h3.5" stroke="#5f6368" stroke-width="1.6"/><path d="M5 4.5l2.6 2.5L5 9.5zM11 4.5L8.4 7l2.6 2.5z" fill="#5f6368"/></svg><svg style="left:786px;top:81px" width="7" height="4"><path d="M0 0h7L3.5 4z" fill="#5f6368"/></svg><div class="a" style="left:802px;top:73px;width:1px;height:19px;background:#dadce0"></div><svg style="left:813px;top:76px" width="14" height="14"><path d="M0 0.9h14M0 5h9.5M0 9.1h14M0 13.1h9.5" stroke="#5f6368" stroke-width="1.8"/></svg><svg style="left:833px;top:82px" width="8" height="4"><path d="M0 0h8L4 4z" fill="#5f6368"/></svg><svg style="left:853px;top:76px" width="12" height="14"><path d="M6 0v8" stroke="#5f6368" stroke-width="1.8"/><path d="M2.5 6l3.5 4 3.5-4z" fill="#5f6368"/><path d="M0 13.1h12" stroke="#5f6368" stroke-width="1.8"/></svg><svg style="left:872px;top:82px" width="8" height="4"><path d="M0 0h8L4 4z" fill="#5f6368"/></svg><svg style="left:890px;top:76px" width="15" height="14"><path d="M1.1 0v14" stroke="#5f6368" stroke-width="2"/><path d="M4.5 7h7" stroke="#5f6368" stroke-width="1.8"/><path d="M10.5 4l3.8 3-3.8 3z" fill="#5f6368"/><path d="M7.8 0v3.5M7.8 10.5v3.5" stroke="#5f6368" stroke-width="1.7"/></svg><svg style="left:911px;top:82px" width="8" height="4"><path d="M0 0h8L4 4z" fill="#5f6368"/></svg><svg style="left:929px;top:76px" width="17" height="14"><path d="M1 1l10.5 2.5-6.5 6z" fill="none" stroke="#5f6368" stroke-width="1.7" stroke-linejoin="round"/><path d="M4.5 13.2L15 3" stroke="#5f6368" stroke-width="1.8"/><path d="M10.5 1.8h5.2v5.2z" fill="#5f6368"/></svg><svg style="left:950px;top:82px" width="8" height="4"><path d="M0 0h8L4 4z" fill="#5f6368"/></svg><div class="a" style="left:967px;top:73px;width:1px;height:19px;background:#dadce0"></div><svg style="left:979px;top:82px" width="14" height="3"><circle cx="1.5" cy="1.5" r="1.5" fill="#5f6368"/><circle cx="7" cy="1.5" r="1.5" fill="#5f6368"/><circle cx="12.5" cy="1.5" r="1.5" fill="#5f6368"/></svg><svg style="left:1145px;top:78px" width="14" height="8"><path d="M1 7l6-6 6 6" fill="none" stroke="#5f6368" stroke-width="2"/></svg><div class="t" style="left:10px;top:101px;font-size:22px;color:#bdc1c6;font-family:Liberation Serif,serif"><i>fx</i></div><div class="a" style="left:42px;top:106px;width:1px;height:17px;background:#dadce0"></div><div class="t" style="left:54px;top:107px;font-size:13px;color:#000">ファイル名</div><svg style="left:1158px;top:157px" width="9" height="7"><path d="M1 6l3.5-4 3.5 4" fill="none" stroke="#444" stroke-width="2.2"/></svg><svg style="left:1158px;top:697px" width="9" height="7"><path d="M1 1l3.5 4 3.5-4" fill="none" stroke="#444" stroke-width="2.2"/></svg><svg style="left:47px;top:715px" width="7" height="8"><path d="M6 0.5L2 4l4 3.5" fill="none" stroke="#444" stroke-width="2.2"/></svg><svg style="left:1142px;top:715px" width="7" height="8"><path d="M1 0.5L5 4 1 7.5" fill="none" stroke="#444" stroke-width="2.2"/></svg><div class="a" style="left:330px;top:65px;width:310px;height:675px;background:#fff;border-radius:0 4px 4px 4px;box-shadow:0 2px 6px 2px rgba(60,64,67,.15),0 1px 2px rgba(60,64,67,.3)"></div><div class="t" style="left:369px;top:81px;font-size:14px;color:#202124"><b>列 A</b> を基準にA <svg style="position:relative;display:inline-block;width:14px;height:8px;vertical-align:0px" width="14" height="8"><path d="M1.3 4.5h12.4" stroke="#202124" stroke-width="1.1"/><path d="M10.9 1.6L13.8 4.5 10.9 7.4" fill="none" stroke="#202124" stroke-width="1.1"/></svg> Zでシートを並べ替え</div><div class="t" style="left:369px;top:113px;font-size:14px;color:#202124"><b>列 A</b> を基準にZ <svg style="position:relative;display:inline-block;width:14px;height:8px;vertical-align:0px" width="14" height="8"><path d="M1.3 4.5h12.4" stroke="#202124" stroke-width="1.1"/><path d="M10.9 1.6L13.8 4.5 10.9 7.4" fill="none" stroke="#202124" stroke-width="1.1"/></svg> Aでシートを並べ替え</div><div class="a" style="left:367px;top:144px;width:273px;height:1px;background:#dadce0"></div><div class="t" style="left:369px;top:162px;font-size:14px;color:#202124"><b>列 A</b> を基準にA <svg style="position:relative;display:inline-block;width:14px;height:8px;vertical-align:0px" width="14" height="8"><path d="M1.3 4.5h12.4" stroke="#202124" stroke-width="1.1"/><path d="M10.9 1.6L13.8 4.5 10.9 7.4" fill="none" stroke="#202124" stroke-width="1.1"/></svg> Zで範囲を並べ替え</div><div class="t" style="left:369px;top:194px;font-size:14px;color:#202124"><b>列 A</b> を基準にZ <svg style="position:relative;display:inline-block;width:14px;height:8px;vertical-align:0px" width="14" height="8"><path d="M1.3 4.5h12.4" stroke="#202124" stroke-width="1.1"/><path d="M10.9 1.6L13.8 4.5 10.9 7.4" fill="none" stroke="#202124" stroke-width="1.1"/></svg> Aで範囲を並べ替え</div><div class="a" style="left:367px;top:225px;width:273px;height:1px;background:#dadce0"></div><div class="t" style="left:369px;top:242px;font-size:14px;color:#202124">範囲を並べ替え</div><div class="t" style="left:369px;top:274px;font-size:14px;color:#202124">フィルタを作成</div><div class="t" style="left:369px;top:306px;font-size:14px;color:#202124">フィルタ表示</div><div class="t" style="left:369px;top:339px;font-size:14px;color:#202124">スライサー</div><div class="a" style="left:367px;top:370px;width:273px;height:1px;background:#dadce0"></div><div class="t" style="left:369px;top:387px;font-size:14px;color:#202124">データの入力規則</div><div class="a" style="left:331px;top:411px;width:308px;height:32px;background:#f1f3f4"></div><div class="t" style="left:369px;top:420px;font-size:14px;color:#3c4043">ピボット テーブル</div><div class="t" style="left:369px;top:452px;font-size:14px;color:#202124">範囲をランダム化</div><div class="t" style="left:369px;top:484px;font-size:14px;color:#202124">名前付き範囲</div><div class="t" style="left:369px;top:516px;font-size:14px;color:#202124">保護されたシートと範囲</div><div class="a" style="left:367px;top:547px;width:273px;height:1px;background:#dadce0"></div><div class="t" style="left:369px;top:564px;font-size:14px;color:#9aa0a6">テキストを列に分割</div><div class="t" style="left:369px;top:596px;font-size:14px;color:#202124">重複を削除</div><div class="t" style="left:369px;top:629px;font-size:14px;color:#202124">空白文字を削除</div><div class="a" style="left:367px;top:660px;width:273px;height:1px;background:#dadce0"></div><div class="t" style="left:369px;top:677px;font-size:14px;color:#202124">グループ化</div><div class="t" style="left:369px;top:709px;font-size:14px;color:#9aa0a6">グループ化を解除</div><div class="t" style="left:546px;top:679px;font-size:13px;color:#5f6368;font-weight:bold">Alt+Shift+</div><div class="t" style="left:546px;top:711px;font-size:13px;color:#c4c7c9;font-weight:bold">Alt+Shift+</div><svg style="left:610px;top:682px" width="14" height="7"><path d="M0 3.5h12.5" stroke="#5f6368" stroke-width="1.1"/><path d="M10 1l3 2.5-3 2.5" fill="none" stroke="#5f6368" stroke-width="1.1"/></svg><svg style="left:610px;top:714px" width="14" height="7"><path d="M1 3.5h13" stroke="#c4c7c9" stroke-width="1.1"/><path d="M4 1L1 3.5 4 6" fill="none" stroke="#c4c7c9" stroke-width="1.1"/></svg><svg style="left:345px;top:276px" width="14" height="12"><path d="M0 0h14L8.2 6.5V12H5.8V6.5z" fill="#5f6368"/><path d="M3.5 2h7L7 6z" fill="#fff"/></svg><svg style="left:345px;top:341px" width="15" height="10"><path d="M0 0h15v2H0zM3 4h9v2H3zM6 8h3v2H6z" fill="#5f6368"/></svg><svg style="left:616px;top:310px" width="7" height="7"><path d="M0 0l7 3.5L0 7z" fill="#80868b"/></svg><div class="a" style="left:549px;top:334px;width:75px;height:24px;border:1px solid #188038;border-radius:4px"></div><div class="t" style="left:558px;top:339px;font-size:14px;color:#188038">新規作成</div><div class="a" style="left:324px;top:25px;width:74px;height:46px;border:5px solid #ff7f27"></div><div class="a" style="left:326px;top:408px;width:320px;height:42px;border:5px solid #ff7f27"></div>
</body></html>
